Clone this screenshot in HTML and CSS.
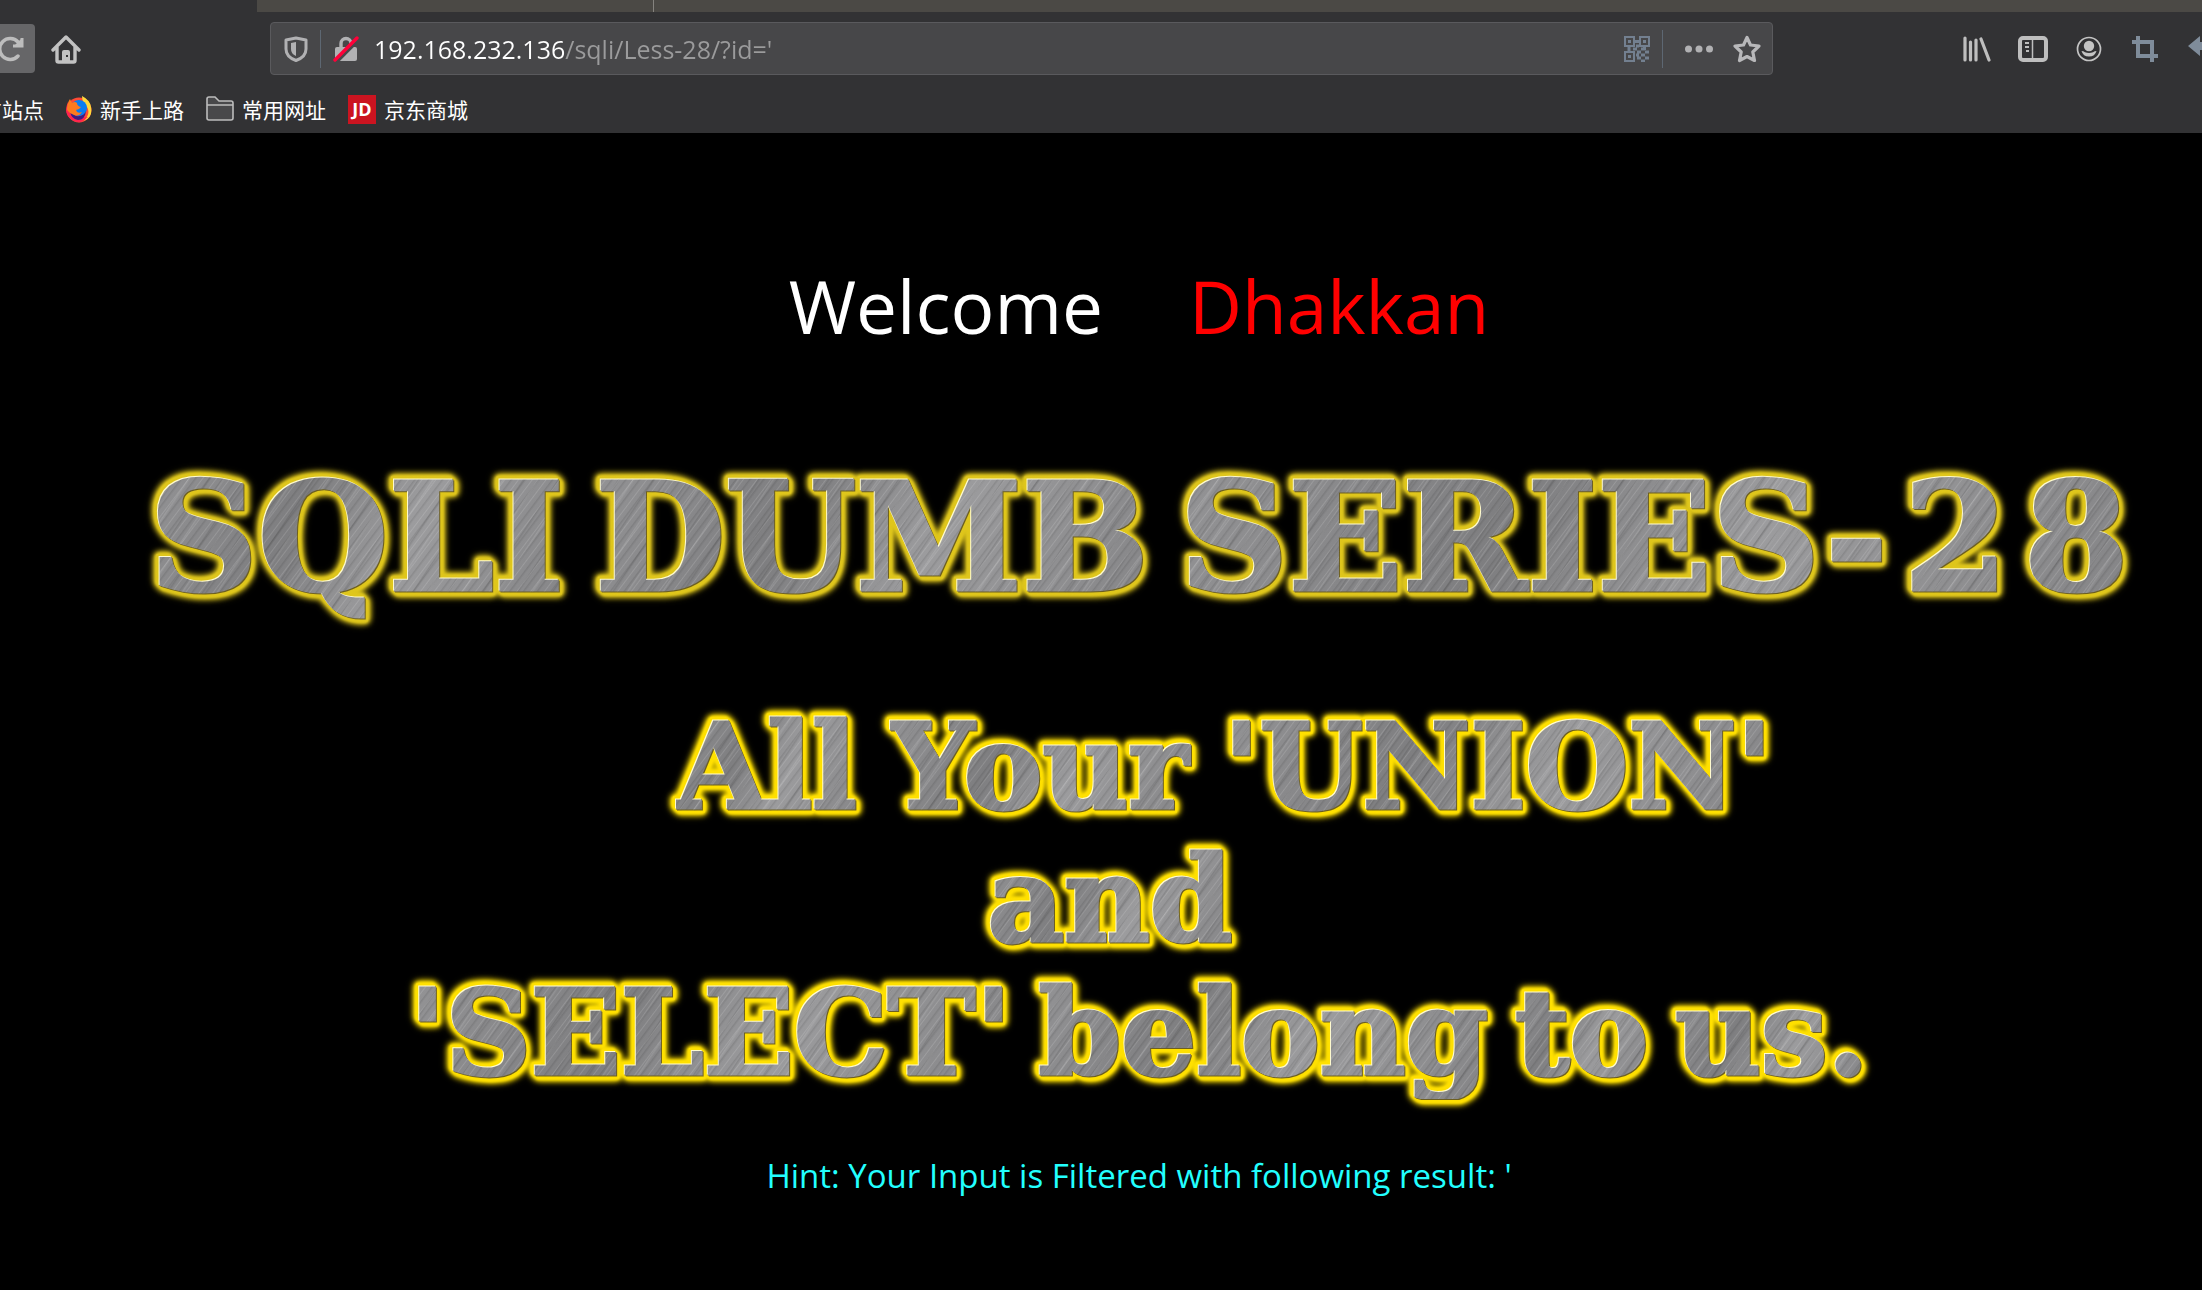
FILE: index.html
```html
<!DOCTYPE html>
<html lang="zh-CN">
<head>
<meta charset="utf-8">
<title>Less-28</title>
<link rel="stylesheet" href="styles.css">
</head>
<body>
<header class="browser">
  <div class="tabstrip"><span class="tab-current"></span><span class="tab-other"></span><span class="tab-rest"></span></div>
  <nav class="toolbar">
    <div class="nav-buttons">
      <button class="reload" aria-label="Reload"><svg width="25" height="26" viewBox="0 0 25 26"><path d="M19 20A10.500 10.500 0 1 1 19 6" fill="none" stroke="#bdbdbd" stroke-width="3.500" stroke-linecap="round"/><path d="M23 2V10H14" fill="none" stroke="#bdbdbd" stroke-width="3"/><path d="M23 2v9h-9z" fill="#bdbdbd"/></svg></button>
      <button class="home" aria-label="Home"><svg width="30" height="30" viewBox="0 0 30 30"><path d="M2 16L15 3L28 16M6 13V26.500Q6 28 7.500 28H22.500Q24 28 24 26.500V13" fill="none" stroke="#c2c2c2" stroke-width="3.400" stroke-linejoin="round" stroke-linecap="round"/><path fill-rule="evenodd" d="M11 28V18q0-2 2-2h4q2 0 2 2v10zM15 21h2v2h-2z" fill="#c2c2c2"/></svg></button>
    </div>
    <div class="urlbar">
      <button class="shield" aria-label="Protections"><svg width="24" height="26" viewBox="0 0 24 26"><path d="M12 2L22 4V13Q22 21 12 24.500Q2 21 2 13V4Z" fill="none" stroke="#b1b1b3" stroke-width="3" stroke-linejoin="round"/><path d="M12 6v14q-5-2-5-7V7z" fill="#b1b1b3"/></svg></button>
      <span class="divider"></span>
      <button class="lock" aria-label="Connection is not secure"><svg width="26" height="28" viewBox="0 0 26 28"><path d="M8 14V8.500a5 5 0 0 1 10 0V14" fill="none" stroke="#b1b1b3" stroke-width="3.400"/><rect x="2" y="12" width="22" height="14" rx="2" fill="#b1b1b3"/><path d="M3.500 26.500L25.500 4.500" stroke="#47474a" stroke-width="4"/><path d="M2 25L24 3" stroke="#ff0039" stroke-width="3.400" stroke-linecap="round"/></svg></button>
      <input class="address" type="text" aria-label="Address" value="192.168.232.136/sqli/Less-28/?id='">
      <button class="qr" aria-label="QR code"><svg width="26" height="26" viewBox="0 0 26 26" fill="none" stroke="#738090" stroke-width="2"><path d="M1 1h9v9H1zM16 1h9v9h-9zM1 16h9v9H1z"/><path d="M4 5.500h3M19 5.500h3M4 20.500h3" stroke-width="3"/><path d="M11 5.500h4M5 11v4M20.500 11v3" stroke-width="3"/><path d="M9 13h4M13 16h4M17 13h4M21 16h4M13 22h4M17 19h4M21 22h4M17 25h4M12 19h3M12 10h3" stroke-width="3"/></svg></button>
      <span class="divider"></span>
      <button class="dots" aria-label="Page actions"><svg width="28" height="8" viewBox="0 0 28 8" fill="#b1b1b3"><circle cx="3.500" cy="4" r="3.500"/><circle cx="14" cy="4" r="3.500"/><circle cx="24.500" cy="4" r="3.500"/></svg></button>
      <button class="star" aria-label="Bookmark"><svg width="28" height="28" viewBox="0 0 28 28"><path d="M14 2.500L17.500 10L26 11L19.800 17L21.500 25.500L14 21.500L6.500 25.500L8.200 17L2 11L10.500 10Z" fill="none" stroke="#b8b8ba" stroke-width="3.200" stroke-linejoin="round"/></svg></button>
    </div>
    <div class="actions">
      <button aria-label="Library"><svg width="28" height="26" viewBox="0 0 28 26" stroke="#bebebe" stroke-width="3.200" stroke-linecap="round"><path d="M2 2V24M7.500 6V24M13 4V24M18 3L26 24"/></svg></button>
      <button aria-label="Sidebars"><svg width="30" height="28" viewBox="0 0 30 28" fill="none" stroke="#bebebe"><rect x="2" y="3" width="26" height="22" rx="3" stroke-width="4"/><path d="M14.500 4v20" stroke-width="1.500"/><path d="M7 8h4M7 12h4M8 16h3" stroke-width="2"/></svg></button>
      <button aria-label="Account"><svg width="26" height="26" viewBox="0 0 26 26"><circle cx="13" cy="13" r="11.500" fill="none" stroke="#c4c4c4" stroke-width="1.700"/><circle cx="13" cy="10" r="5.200" fill="#c4c4c4"/><path d="M5.500 15q2 0 3.500 1.300q4 1.500 8 0Q18.500 15 20.500 15Q19 20.500 13 20.500T5.500 15z" fill="#c4c4c4"/></svg></button>
      <button aria-label="Screenshot"><svg width="26" height="26" viewBox="0 0 26 26" fill="none" stroke="#7f8c9a" stroke-width="4"><path d="M6 0V20H26M0 6H20V26"/></svg></button>
      <button aria-label="Undo"><svg width="26" height="26" viewBox="0 0 26 26"><path d="M0 10L12 0V6H26V14H12V20Z" fill="#7f8c9a"/></svg></button>
    </div>
  </nav>
  <div class="bookmarks">
    <a class="bookmark" href="#">官方站点</a>
    <a class="bookmark" href="#"><svg width="26" height="28" viewBox="0 0 26 28"><circle cx="13" cy="15" r="12.500" fill="#ff4a35"/><path d="M16 1q8 4 9 11q2 10-7 14q7-8 3-14q-5-4-5-11z" fill="#ffd83a"/><path d="M2 7q-4 9 0 14q5 7 13 6l7-5Q8 24 5 12z" fill="#ff234f"/><circle cx="13" cy="13" r="8" fill="#0a7df0"/><path d="M10 21q8 1 10-5q-1 9-8 9q-7-1-8-9z" fill="#3b1d83"/><path d="M1 15Q1 8 4 4l2 4q3-2 5 0q0 3 4 4q-2 3-5 3q1 4 6 2q-3 5-8 3q-5-2-7-5z" fill="#ff7a1e"/></svg>新手上路</a>
    <a class="bookmark" href="#"><svg width="28" height="26" viewBox="0 0 28 26"><path d="M1 22V3q0-2 2-2h6l4 4h12q2 0 2 2v15q0 2-2 2H3q-2 0-2-2zM1 9H27" fill="#48484a" stroke="#bcbcbc" stroke-width="1.600"/></svg>常用网址</a>
    <a class="bookmark" href="#"><span class="jd">JD</span>京东商城</a>
  </div>
</header>
<main class="page">
  <h1 class="welcome"><span>Welcome</span><span class="name">Dhakkan</span></h1>
  <h2 class="metal series"><span>SQLI</span><span>DUMB</span><span>SERIES-<i class="digit">2</i><i class="digit">8</i></span></h2>
  <div class="motto">
    <p class="metal line union"><span>All</span><span>Your</span><span>'UNION'</span></p>
    <p class="metal line and"><span>and</span></p>
    <p class="metal line"><span>'SELECT'</span><span>belong</span><span>to</span><span>us.</span></p>
  </div>
  <p class="hint">Hint: Your Input is Filtered with following result: '</p>
</main>
</body>
</html>
```
FILE: styles.css
```css
* { box-sizing: border-box; }
body {
  margin: 0;
  min-height: 100vh;
  background: #000;
  color: #fff;
  font-family: "Open Sans", "Noto Sans CJK SC", sans-serif;
  overflow-x: hidden;
}
h1, h2, p { margin: 0; font-weight: 400; }
button { border: 0; padding: 0; background: none; display: flex; align-items: center; justify-content: center; flex: none; }
svg { display: block; flex: none; }

.browser { background: #323234; height: 133px; overflow: hidden; }
.tabstrip { display: flex; height: 12px; background: #4b4945; }
.tab-current { width: 257px; background: #323234; }
.tab-other { width: 397px; border-right: 1px solid #85837f; }
.toolbar { display: flex; height: 73px; align-items: center; }
.nav-buttons { display: flex; align-items: center; width: 270px; gap: 16px; flex: none; }
.reload { width: 35px; height: 49px; background: #666668; border-radius: 0 4px 4px 0; justify-content: flex-start; }
.reload svg { margin-left: -1px; }
.urlbar {
  display: flex; align-items: center; flex: 1; min-width: 0; height: 53px;
  border: 1px solid #5a5a5d; border-radius: 4px; background: #474749; padding: 0 11px 0 13px;
}
.divider { width: 1px; height: 38px; background: #5d6772; flex: none; }
.shield { width: 36px; justify-content: flex-start; }
.lock { width: 50px; margin-right: 3px; }
.address {
  flex: 1; min-width: 0; height: 40px; border: 0; padding: 0; outline: 0;
  font: 25px/40px "Open Sans", sans-serif;
  color: transparent;
  background: linear-gradient(90deg, #fff 191px, #9b9b9c 191px);
  -webkit-background-clip: text; background-clip: text;
}
.qr { margin-right: 12px; }
.dots { margin: 0 20px 0 22px; }
.actions { display: flex; width: 253px; margin-left: 176px; flex: none; overflow: hidden; }
.actions button { width: 56px; }

.bookmarks { display: flex; align-items: center; gap: 22px; height: 48px; margin-left: -40px; }
.bookmark {
  display: flex; align-items: center; gap: 8px; flex: none;
  color: #fff; text-decoration: none; font: 21px/30px "Noto Sans CJK SC", sans-serif;
}
.jd { width: 28px; height: 29px; background: #cb1420; font: 700 18px/29px "Open Sans", sans-serif; text-align: center; }

.page { padding: 111px 0 0 76px; text-align: center; }
.welcome { display: flex; justify-content: center; gap: 86px; font-size: 73px; line-height: 124px; }
.name { color: #f00; }

.metal {
  --glow: #ffe000;
  display: flex; justify-content: center;
  font-family: "DejaVu Serif", serif; font-weight: 700; white-space: nowrap;
  filter: drop-shadow(-1px -1px 0 #fffbd0) drop-shadow(1px 1px 0 #6d5f20)
    drop-shadow(2px 2px 0 var(--glow)) drop-shadow(-2px -2px 0 var(--glow))
    drop-shadow(-1px 1px 1px var(--glow)) drop-shadow(1px -1px 1px var(--glow))
    drop-shadow(0 0 3px var(--glow)) drop-shadow(0 0 2px var(--glow));
}
.metal > span {
  color: transparent;
  -webkit-text-stroke: 3px transparent;
  background:
    repeating-linear-gradient(127deg, #fff0 0 2px, #ffffff24 3px, #fff0 4px 7px, #00000018 8px, #0000 10px 11px),
    repeating-linear-gradient(124deg, #0000 0 5px, #0000001a 6px, #0000 8px 17px, #ffffff20 18px, #0000 20px 29px),
    linear-gradient(115deg, #949496, #7e7e80 35%, #9c9c9e 60%, #848486);
  -webkit-background-clip: text; background-clip: text;
}
.series { --glow: #dfc61c; gap: 31px; margin-top: 84px; font-size: 150px; line-height: 170px; }
.digit { font-style: normal; margin-left: 16px; }
.motto { margin-top: 78px; }
.line { gap: 27px; font-size: 118px; line-height: 133px; }
.union { gap: 33px; padding-left: 170px; }
.and { padding-right: 58px; }
.hint { margin-top: 53px; color: #2ff; font-size: 33px; line-height: 48px; }
```
